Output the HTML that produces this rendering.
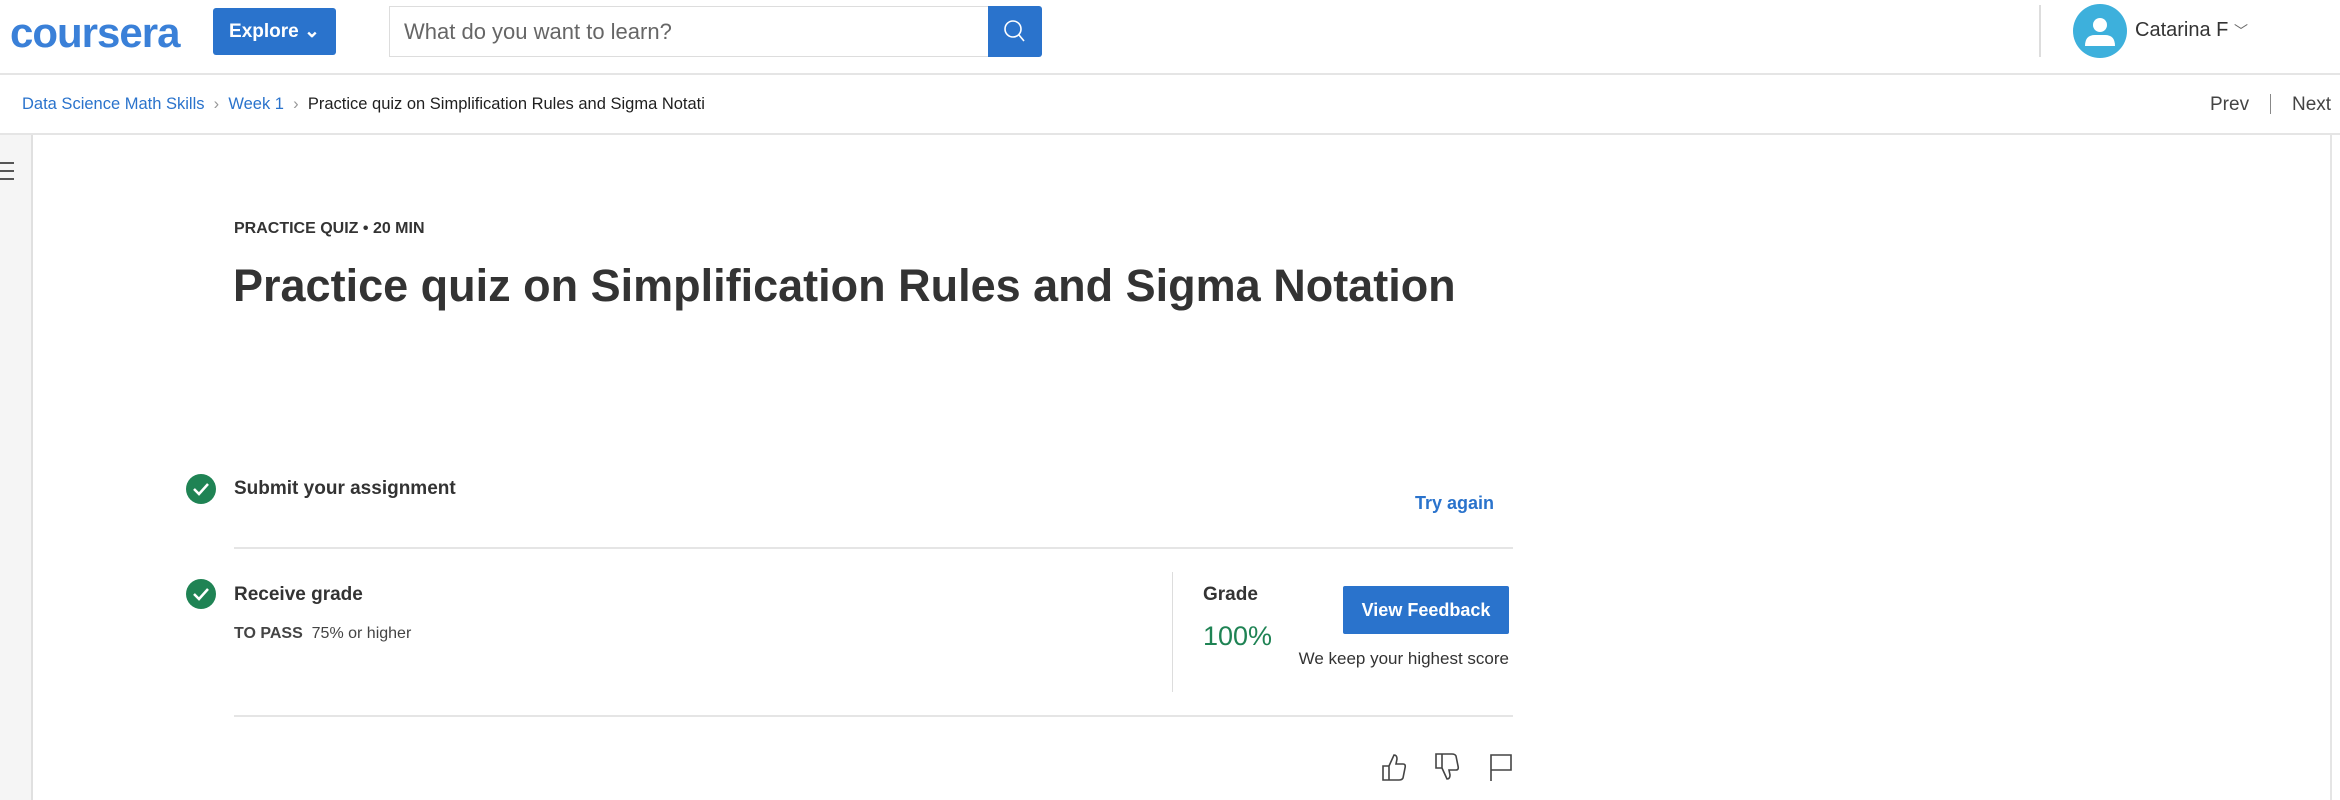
<!DOCTYPE html>
<html><head><meta charset="utf-8"><style>
*{margin:0;padding:0;box-sizing:border-box}
body{width:2340px;height:800px;overflow:hidden;background:#fff;font-family:"Liberation Sans",sans-serif;color:#1f1f1f;position:relative}
.a{position:absolute;white-space:nowrap}
</style></head><body>
<div class="a" style="left:0;top:0;width:2340px;height:75px;border-bottom:2px solid #e5e5e5"></div>
<div class="a" style="left:10px;top:9px;font-size:42px;font-weight:bold;color:#3a80d8;letter-spacing:-1px">coursera</div>
<div class="a" style="left:213px;top:8px;width:123px;height:47px;background:#2a73cc;border-radius:3px;color:#fff;font-weight:bold;font-size:19px;line-height:47px;text-align:center">Explore ⌄</div>
<div class="a" style="left:389px;top:6px;width:600px;height:51px;border:1px solid #ddd;font-size:22px;color:#666;line-height:49px;padding-left:14px">What do you want to learn?</div>
<div class="a" style="left:988px;top:6px;width:54px;height:51px;background:#2a73cc;border-radius:0 3px 3px 0"><svg width="54" height="51"><circle cx="25" cy="23" r="8" stroke="#fff" stroke-width="1.6" fill="none"/><line x1="31" y1="29" x2="36" y2="35" stroke="#fff" stroke-width="1.6"/></svg></div>
<div class="a" style="left:2039px;top:5px;width:2px;height:52px;background:#ddd"></div>
<div class="a" style="left:2073px;top:4px"><svg width="54" height="54"><circle cx="27" cy="27" r="27" fill="#3db0dc"/><circle cx="27" cy="21" r="7" fill="#fff"/><path d="M12 42 Q12 31 22 31 H32 Q42 31 42 42 Z" fill="#fff"/></svg></div>
<div class="a" style="left:2135px;top:19px;font-size:20px;color:#333">Catarina F <span style="font-size:14px;color:#666">﹀</span></div>
<div class="a" style="left:22px;top:95px;font-size:16.5px;color:#2a73cc">Data Science Math Skills <span style="color:#999">&nbsp;›&nbsp;</span> Week 1 <span style="color:#999">&nbsp;›&nbsp;</span> <span style="color:#1f1f1f">Practice quiz on Simplification Rules and Sigma Notati</span></div>
<div class="a" style="left:2210px;top:94px;font-size:19px;color:#444">Prev</div>
<div class="a" style="left:2270px;top:94px;width:1px;height:20px;background:#888"></div>
<div class="a" style="left:2292px;top:94px;font-size:19px;color:#444">Next</div>
<div class="a" style="left:0;top:133px;width:2340px;height:2px;background:#e5e5e5"></div>
<div class="a" style="left:0;top:135px;width:33px;height:665px;background:#f5f5f5;border-right:2px solid #e0e0e0"></div>
<div class="a" style="left:0;top:162px;width:14px;height:18px;border-top:2px solid #555;border-bottom:2px solid #555"><div style="margin-top:6px;height:2px;background:#555"></div></div>
<div class="a" style="left:2330px;top:135px;width:2px;height:665px;background:#e5e5e5"></div>
<div class="a" style="left:234px;top:220px;font-size:16px;font-weight:bold;color:#333">PRACTICE QUIZ • 20 MIN</div>
<div class="a" style="left:233px;top:260px;font-size:45px;font-weight:bold;color:#333">Practice quiz on Simplification Rules and Sigma Notation</div>
<svg class="a" style="left:186px;top:474px" width="30" height="30"><circle cx="15" cy="15" r="15" fill="#1f8354"/><path d="M8 15 L13 20 L22 10" stroke="#fff" stroke-width="2.5" fill="none"/></svg>
<div class="a" style="left:234px;top:478px;font-size:19px;font-weight:bold;color:#333">Submit your assignment</div>
<div class="a" style="left:1415px;top:493px;font-size:18px;font-weight:bold;color:#2a73cc">Try again</div>
<div class="a" style="left:234px;top:547px;width:1279px;height:2px;background:#e5e5e5"></div>
<svg class="a" style="left:186px;top:579px" width="30" height="30"><circle cx="15" cy="15" r="15" fill="#1f8354"/><path d="M8 15 L13 20 L22 10" stroke="#fff" stroke-width="2.5" fill="none"/></svg>
<div class="a" style="left:234px;top:584px;font-size:19px;font-weight:bold;color:#333">Receive grade</div>
<div class="a" style="left:234px;top:625px;font-size:16px;color:#444"><b>TO PASS</b>&nbsp; 75% or higher</div>
<div class="a" style="left:1172px;top:572px;width:1px;height:120px;background:#ddd"></div>
<div class="a" style="left:1203px;top:584px;font-size:19px;font-weight:bold;color:#333">Grade</div>
<div class="a" style="left:1203px;top:621px;font-size:27px;color:#1f8354">100%</div>
<div class="a" style="left:1343px;top:586px;width:166px;height:48px;background:#2a73cc;border-radius:2px;color:#fff;font-size:18px;font-weight:bold;line-height:48px;text-align:center">View Feedback</div>
<div class="a" style="left:1250px;top:649px;width:259px;text-align:right;font-size:17px;color:#333">We keep your highest score</div>
<div class="a" style="left:234px;top:715px;width:1279px;height:2px;background:#e5e5e5"></div>
<svg class="a" style="left:1380px;top:752px" width="140" height="30" fill="none" stroke="#444" stroke-width="1.6">
<path d="M3 14 H9 V28 H3 Z M9 14 L14 3 Q17 3 17 7 L16 12 H23 Q26 12 25 16 L23 26 Q22 28 19 28 H9"/>
<path d="M56 16 H62 V2 H56 Z M62 16 L67 27 Q70 27 70 23 L69 18 H76 Q79 18 78 14 L76 4 Q75 2 72 2 H62"/>
<path d="M111 29 V3 H131 V18 H111"/>
</svg>
</body></html>
